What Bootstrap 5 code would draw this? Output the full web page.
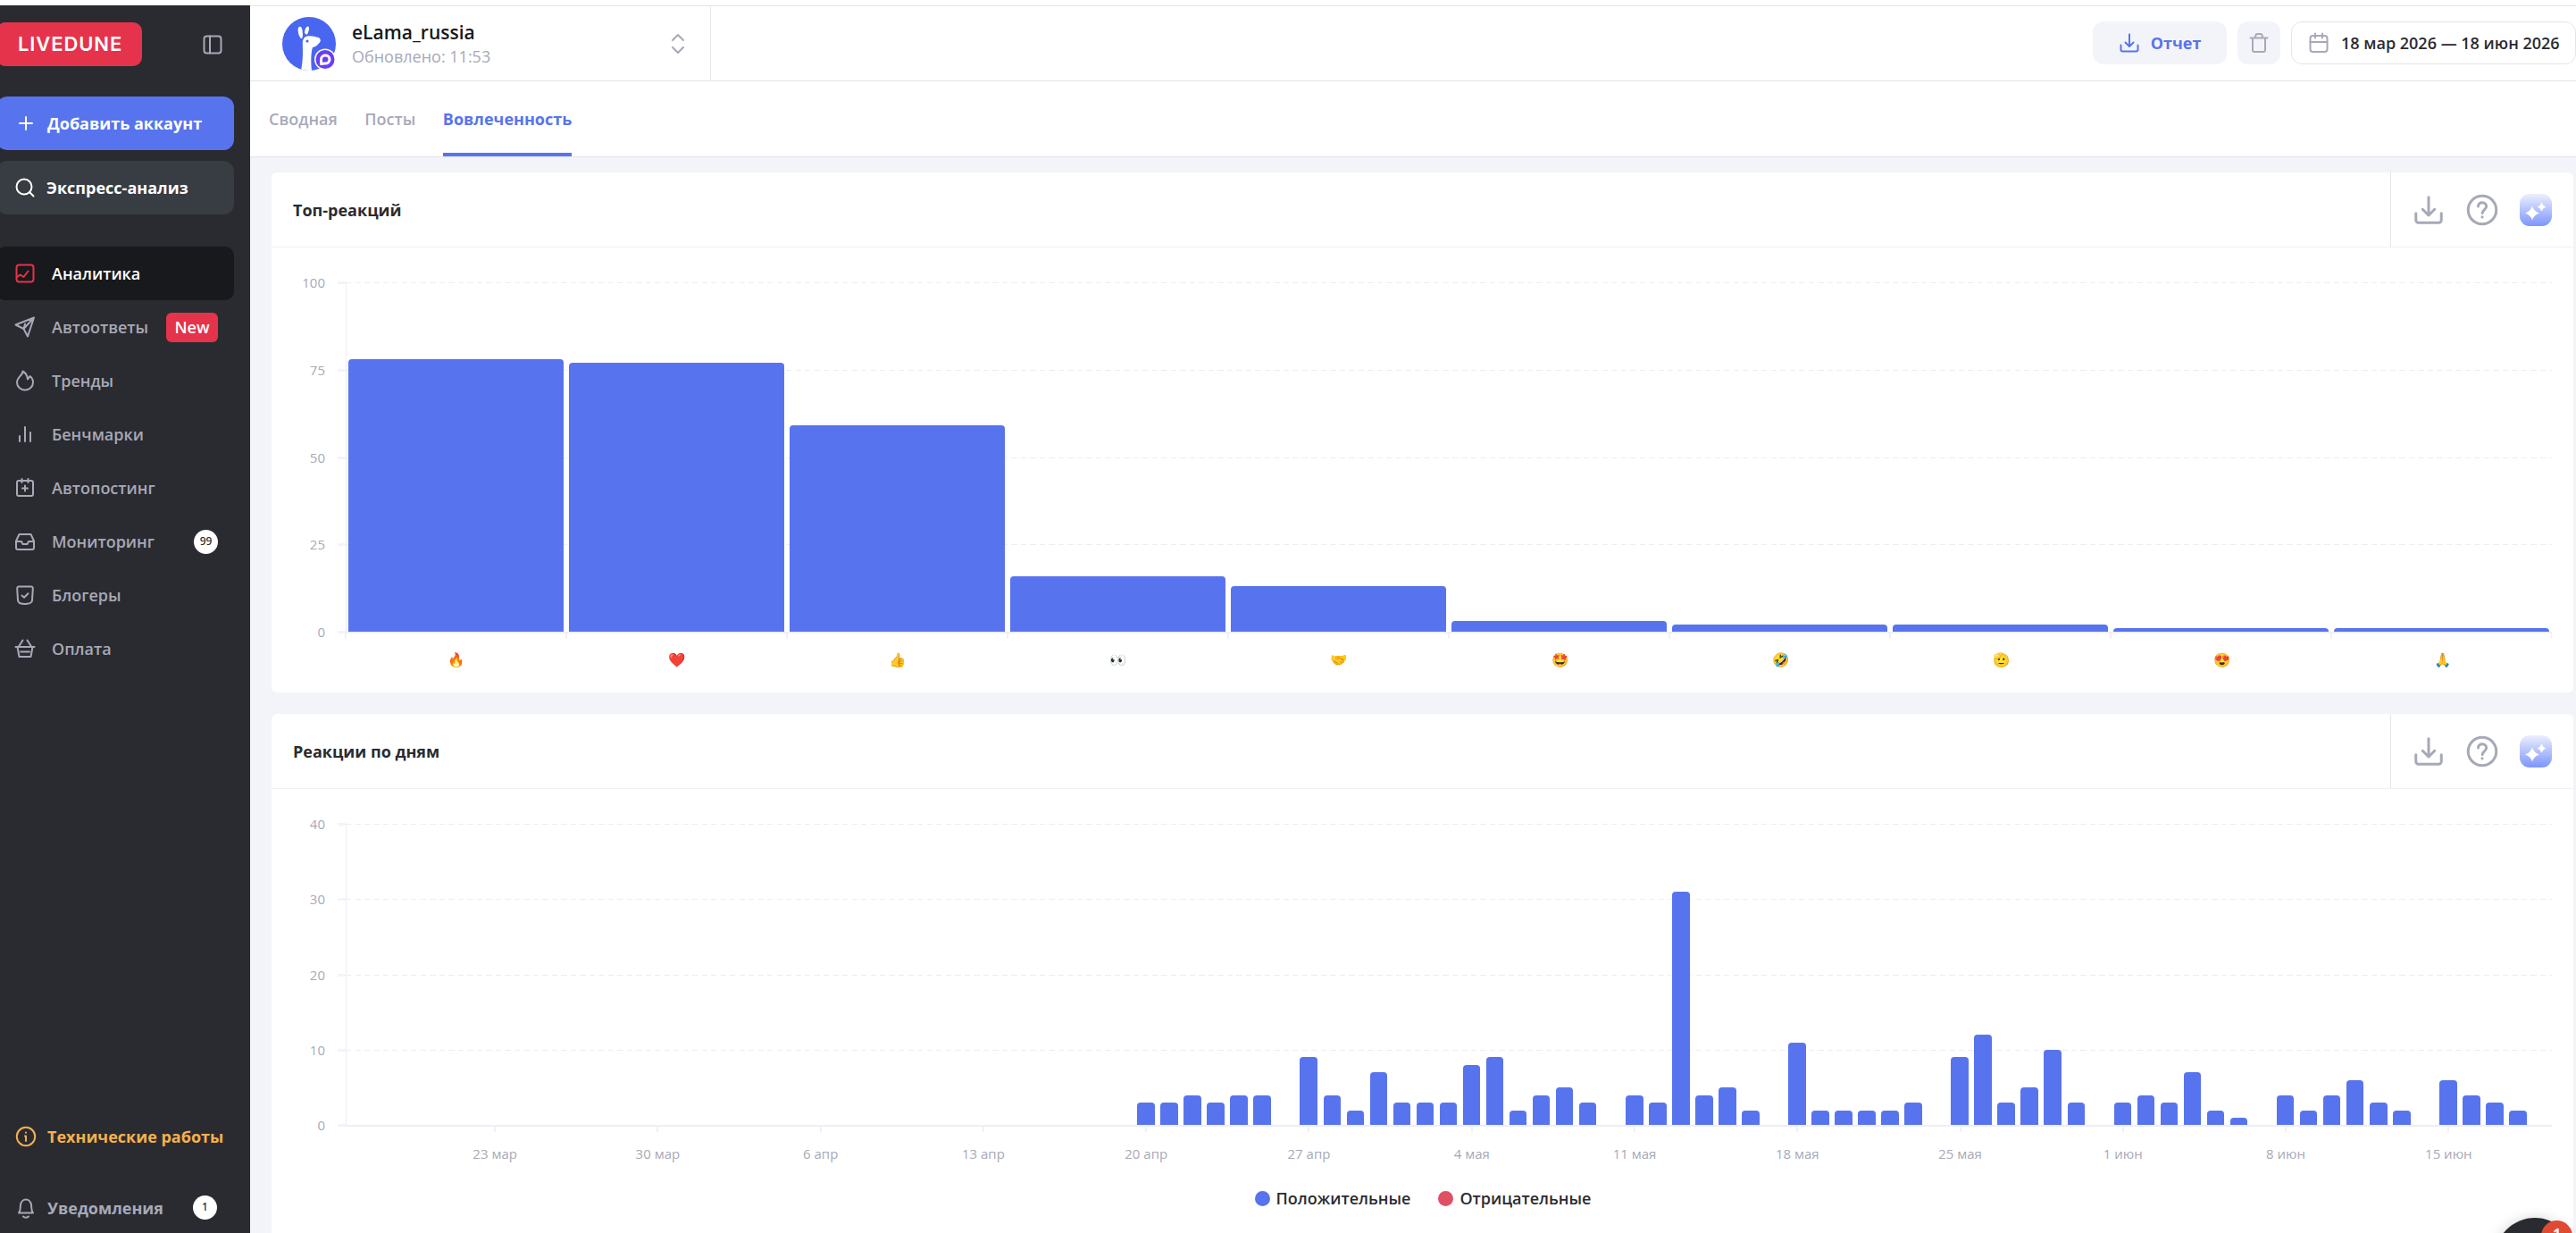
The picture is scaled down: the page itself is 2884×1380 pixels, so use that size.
<!DOCTYPE html>
<html lang="ru">
<head>
    <meta charset="UTF-8">
    <meta name="viewport" content="width=device-width, initial-scale=1.0">
    <title>Вовлеченность</title>
    <!-- Bootstrap CSS -->
    <link href="https://cdn.jsdelivr.net/npm/bootstrap@5.3.0/dist/css/bootstrap.min.css" rel="stylesheet">

    <style>
        body { font-family: "Open Sans", "Noto Sans", sans-serif; font-size: 18px; line-height: 24px; color: #2a2b30; background: #fff; height: 1380px; overflow: hidden; padding-top: 6px; }
        svg { display: block; fill: none; stroke: currentColor; stroke-width: 2; stroke-linecap: round; stroke-linejoin: round; flex-shrink: 0; }
        svg.solid { stroke: none; }
        a { color: inherit; text-decoration: none; }
        .ic { width: 24px; height: 24px; }

        /* Sidebar */
        .side { width: 280px; background: #2a2b30; color: #a7a9b7; overflow: hidden; }
        .side-top { height: 49px; margin: 19px 30px 34px -4px; }
        .logo { font-family: Inter, sans-serif; font-weight: 600; font-size: 22px; letter-spacing: .9px; background: #e5334b; color: #fff; border-radius: 10px; width: 163px; padding-left: 24px; line-height: 49px; }
        .side-btn, .side-link { height: 60px; margin-left: -4px; margin-right: 18px; color: #fff; border-radius: 12px; font-weight: 700; }
        .side-btn { padding-left: 20px; gap: 12px; margin-bottom: 12px; }
        .btn-add { background: #5774ee; }
        .btn-add .ic { margin-left: 1px; }
        .btn-express { background: #383c43; margin-bottom: 36px; }
        .side-link { padding-left: 20px; padding-right: 18px; gap: 18px; color: #a7a9b7; font-weight: 600; }
        .side-link.active { background: #18191c; color: #fff; border-radius: 10px; }
        .side-link.active svg { color: #e5334b; }
        .tag-new { background: #e5334b; color: #fff; border-radius: 6px; width: 58px; line-height: 33px; text-align: center; }
        .count { width: 27px; height: 27px; border-radius: 50%; background: #fff; color: #2a2b30; font-family: "Noto Sans", sans-serif; font-size: 12px; line-height: 26px; text-align: center; font-weight: 500; }
        .side-foot { gap: 54px; font-weight: 700; padding: 0 37px 15px 17px; }
        .side-foot a { gap: 12px; }
        .warn { color: #f5b04e; }

        /* Header and tabs */
        .wrap, .main { height: 1374px; }
        .main { width: 2604px; background: #f3f4f9; overflow: hidden; }
        .topbar { height: 85px; background: #fff; border-top: 1px solid #e4e5ea; border-bottom: 1px solid #e4e5ea; }
        .account { width: 516px; border-right: 1px solid #e9eaef; padding: 0 28px 0 36px; gap: 18px; }
        .acc-name { font-size: 21px; font-weight: 600; color: #18191c; line-height: 28px; }
        .acc-date { color: #a7a9b7; line-height: 26px; }
        .tools { gap: 12px; padding-bottom: 1px; }
        .tool { height: 48px; border-radius: 12px; background: #f3f4f9; color: #a7a9b7; }
        .tool-report { width: 150px; color: #5774ee; font-weight: 700; gap: 12px; }
        .tool-delete { width: 48px; }
        .tool-date { width: 319px; background: #fff; border: 1px solid #e4e5ea; gap: 13px; padding-left: 18px; }
        .tool-date span { color: #2a2b30; font-weight: 600; }
        .tabs { height: 85px; background: #fff; border-bottom: 1px solid #e4e5ea; padding-left: 21px; gap: 30.5px; color: #a7a9b7; font-weight: 600; }
        .tabs a { line-height: 84px; }
        .tabs .current { color: #5774ee; font-weight: 700; box-shadow: inset 0 -4px #5774ee; }

        /* Chart cards */
        .cards { padding: 17px 3px 0 24px; gap: 24px; }
        .panel { background: #fff; border-radius: 6px; }
        .panel-top { height: 582px; }
        .panel-days { height: 620px; }
        .panel-head { height: 84px; border-bottom: 1px solid #f0f1f6; padding-left: 24px; font-weight: 700; }
        .panel-tools { width: 205px; border-left: 1px solid #e4e5ea; color: #a7a9b7; padding-left: 24px; gap: 24px; }
        .panel-tools svg { width: 36px; height: 36px; }
        .panel-body { padding: 39px 24px 0 0; }
        .plot { display: grid; font-size: 15px; color: #a7a9b7; }
        .plot > * { grid-area: 1 / 1; }
        .y-row { height: var(--step); }
        .y-row:last-child { height: 0; }
        .y-label { width: 60px; margin: -12px 14px 0 0; text-align: right; }
        .y-tick { width: 9px; height: 3px; background: #f3f4f9; margin-top: -1px; }
        .y-line { height: 1px; background: repeating-linear-gradient(90deg, #ededf2 0 6px, transparent 6px 10.5px); }
        .y-row:last-child .y-line { height: 2px; background: #eeeff6; }
        .bars { margin-left: 83px; box-shadow: inset 1px 0 #eeeff5; }
        .bar { background: #5774ee; border-radius: 4px 4px 0 0; }
        .reactions .bar { width: 241.5px; }
        .days { padding: 0 24px; }
        .days .bar { width: 19.6px; }
        .x-axis { margin-left: 82px; color: #a7a9b7; font-size: 15px; }
        .x-cell { border-left: 2px solid #f0f1f7; height: 8px; }
        .x-cell:last-child { border-right: 1px solid #f0f1f7; }
        .emoji { width: 0; font-size: 15.5px; line-height: 20px; margin-top: 13px; padding-left: 2px; }
        .weeks { margin-left: 159px; }
        .week { width: 182.28px; }
        .week i { width: 2px; height: 8px; background: #f0f1f7; margin-bottom: 12px; }
        .legend { gap: 31px; margin-top: 26px; padding-left: 25px; font-weight: 600; }
        .legend i { width: 17px; height: 17px; border-radius: 50%; }
        .legend span { gap: 7px; }
        .dot-positive { background: #5774ee; }
        .dot-negative { background: #e05063; }

        /* Chat button */
        .chat { position: fixed; left: 2793px; top: 1363px; width: 90px; height: 90px; border-radius: 50%; background: #2a2b30; box-shadow: 0 2px 16px rgba(0, 0, 0, .2); }
        .chat b { position: absolute; left: 52px; top: 3px; width: 35px; height: 35px; border-radius: 50%; background: #e04a33; color: #fff; font-size: 16px; line-height: 31px; text-align: center; }
    </style>
</head>
<body>
    <!-- Icons -->
    <svg class="d-none">
        <symbol id="i-panel" viewBox="0 0 24 24"><rect x="2.5" y="2.5" width="19" height="19" rx="3"/><path d="M9 2.5v19"/></symbol>
        <symbol id="i-plus" viewBox="0 0 24 24"><path d="M12 5v14M5 12h14"/></symbol>
        <symbol id="i-search" viewBox="0 0 24 24"><circle cx="11" cy="11" r="8.5"/><path d="M17.5 17.5l4 4"/></symbol>
        <symbol id="i-chart" viewBox="0 0 24 24"><rect x="2.5" y="2.5" width="19" height="19" rx="3"/><path d="M3 16l3.5-2.5 4 2.5 5-6.5"/></symbol>
        <symbol id="i-send" viewBox="0 0 24 24"><path d="M22 1.5L1.500 9.500l9 4.500 4.500 8.500zM10.500 14L22 1.500M10.500 14l1.500-5.500"/></symbol>
        <symbol id="i-fire" viewBox="0 0 24 24"><path d="M9.500 1.500c.5 4-6.500 6.500-6.500 12.500a9 8.500 0 0 0 18 0c0-3.500-1.500-5.500-3.500-7l-2.500 3.500c-.5-3.500-2-7.500-5.500-9z"/></symbol>
        <symbol id="i-bench" viewBox="0 0 24 24"><path d="M6 14v6M12 4v16M18 10v10"/></symbol>
        <symbol id="i-post" viewBox="0 0 24 24"><rect x="3" y="4" width="18" height="17" rx="2"/><path d="M8.500 2v4M15.500 2v4M12 9.500v6M9 12.500h6"/></symbol>
        <symbol id="i-inbox" viewBox="0 0 24 24"><path d="M5.500 4h13l3.500 7.500v7.500a2 2 0 0 1-2 2H4a2 2 0 0 1-2-2v-7.500zM2 12h6l1.500 3h5l1.500-3h6"/></symbol>
        <symbol id="i-shield" viewBox="0 0 24 24"><path d="M5 2.500h14a1.800 1.800 0 0 1 1.800 2L20 18c-.2 3-5 4-8 4s-7.500-1-8-4L3.200 4.500a1.800 1.800 0 0 1 1.800-2zM8.500 12.500l2.500 2.200 4.500-4.500"/></symbol>
        <symbol id="i-basket" viewBox="0 0 24 24"><path d="M1.500 10h21M3.500 10l2 11h13l2-11M5 9.500L9.500 2.500M19 9.500l-4.500-7M7 15.500h10"/></symbol>
        <symbol id="i-info" viewBox="0 0 24 24"><circle cx="12" cy="12" r="10.200"/><path d="M12 11.500V17M12 7.500v.3M11 11.500h1"/></symbol>
        <symbol id="i-bell" viewBox="0 0 24 24"><path d="M4 17.500c2-2 1.500-4 2-9 .5-3.500 3-6 6-6s5.500 2.500 6 6c.5 5 0 7 2 9zM9 21.500c1.500 1.500 4.500 1.500 6 0"/></symbol>
        <symbol id="i-down" viewBox="0 0 24 24"><path d="M12 2.500v13M7.500 11.500l4.500 4.500 4.500-4.500M2.500 14.500v5a2 2 0 0 0 2 2h15a2 2 0 0 0 2-2v-5"/></symbol>
        <symbol id="i-help" viewBox="0 0 24 24"><circle cx="12" cy="12" r="10.500"/><path d="M9 9.300c.3-3.800 6-3.600 6.100 0 0 2.400-3 2.700-3 5M12 17.200v.1"/></symbol>
        <symbol id="i-trash" viewBox="0 0 24 24"><path d="M2.500 6.500h19M5 6.500V20a2 2 0 0 0 2 2h10a2 2 0 0 0 2-2V6.500M8 6c0-3 1-4 2.500-4h3C15 2 16 3 16 6"/></symbol>
        <symbol id="i-cal" viewBox="0 0 24 24"><rect x="2.500" y="4" width="19" height="18" rx="3"/><path d="M2.500 11h19M8 1.500v5M16 1.500v5"/></symbol>
    </svg>

    <div class="wrap d-flex">
        <!-- Sidebar -->
        <aside class="side d-flex flex-column">
            <div class="side-top d-flex justify-content-between align-items-center">
                <a href="#" class="logo">LIVEDUNE</a>
                <svg class="ic"><use href="#i-panel"/></svg>
            </div>
            <a href="#" class="side-btn btn-add d-flex align-items-center"><svg class="ic"><use href="#i-plus"/></svg>Добавить аккаунт</a>
            <a href="#" class="side-btn btn-express d-flex align-items-center"><svg class="ic"><use href="#i-search"/></svg>Экспресс-анализ</a>
            <nav>
                <a href="#" class="side-link active d-flex align-items-center"><svg class="ic"><use href="#i-chart"/></svg>Аналитика</a>
                <a href="#" class="side-link d-flex align-items-center"><svg class="ic"><use href="#i-send"/></svg>Автоответы<span class="tag-new ms-auto">New</span></a>
                <a href="#" class="side-link d-flex align-items-center"><svg class="ic"><use href="#i-fire"/></svg>Тренды</a>
                <a href="#" class="side-link d-flex align-items-center"><svg class="ic"><use href="#i-bench"/></svg>Бенчмарки</a>
                <a href="#" class="side-link d-flex align-items-center"><svg class="ic"><use href="#i-post"/></svg>Автопостинг</a>
                <a href="#" class="side-link d-flex align-items-center"><svg class="ic"><use href="#i-inbox"/></svg>Мониторинг<span class="count ms-auto">99</span></a>
                <a href="#" class="side-link d-flex align-items-center"><svg class="ic"><use href="#i-shield"/></svg>Блогеры</a>
                <a href="#" class="side-link d-flex align-items-center"><svg class="ic"><use href="#i-basket"/></svg>Оплата</a>
            </nav>
            <div class="side-foot d-flex flex-column mt-auto">
                <a href="#" class="warn d-flex align-items-center text-nowrap"><svg class="ic"><use href="#i-info"/></svg>Технические работы</a>
                <a href="#" class="d-flex align-items-center"><svg class="ic"><use href="#i-bell"/></svg>Уведомления<span class="count ms-auto">1</span></a>
            </div>
        </aside>

        <main class="main">
            <!-- Account header -->
            <header class="topbar d-flex">
                <div class="account d-flex align-items-center">
                    <svg class="solid" width="60" height="60" viewBox="0 0 60 60">
                        <defs><clipPath id="round"><circle cx="30" cy="30" r="30"/></clipPath></defs>
                        <circle cx="30" cy="30" r="30" fill="#4866f0"/>
                        <g clip-path="url(#round)" fill="#fff">
                            <path d="M21 60c2.500-12 2-22 1.800-30-.3-6 3-9 7-8.800 4-.2 7 .8 11 1.800 3 2 2.500 5-.3 7-1.500 2.500-4 3.500-6.500 4-2 6-2 17-1 26z"/>
                            <path d="M18 12c1.500-2.500 4-1 4.500 3s1 9-1 9-5-8-3.500-12zM25 18c0-4 2-8 4-7.500s.5 7.500-1.500 9.500z"/>
                        </g>
                        <circle cx="28" cy="27" r="1.600" fill="#4866f0"/>
                        <circle cx="48" cy="47.500" r="12" fill="#fff"/>
                        <circle cx="48" cy="47.500" r="10.500" fill="#6a3df5"/>
                        <path d="M43.500 52.500v-5c0-6 9.500-6 9.500 0 0 3-2.500 5-5.500 4.500z" stroke="#fff" stroke-width="3"/>
                    </svg>
                    <div>
                        <div class="acc-name">eLama_russia</div>
                        <div class="acc-date">Обновлено: 11:53</div>
                    </div>
                    <svg class="ms-auto" width="16" height="24" viewBox="0 0 16 24" color="#a7a9b7"><path d="M2 8l6-6 6 6M2 16l6 6 6-6"/></svg>
                </div>
                <div class="tools d-flex align-items-center ms-auto">
                    <a href="#" class="tool tool-report d-flex align-items-center justify-content-center"><svg class="ic"><use href="#i-down"/></svg>Отчет</a>
                    <a href="#" class="tool tool-delete d-flex align-items-center justify-content-center"><svg class="ic"><use href="#i-trash"/></svg></a>
                    <a href="#" class="tool tool-date d-flex align-items-center text-nowrap"><svg class="ic"><use href="#i-cal"/></svg><span>18 мар 2026 — 18 июн 2026</span></a>
                </div>
            </header>

            <!-- Tabs -->
            <nav class="tabs d-flex">
                <a href="#">Сводная</a>
                <a href="#">Посты</a>
                <a href="#" class="current">Вовлеченность</a>
            </nav>

            <div class="cards d-flex flex-column">
                <!-- Top reactions -->
                <section class="panel panel-top">
                    <div class="panel-head d-flex align-items-center justify-content-between">
                        Топ-реакций
                        <div class="panel-tools d-flex align-items-center h-100">
                            <svg><use href="#i-down"/></svg>
                            <svg><use href="#i-help"/></svg>
                            <svg class="solid" viewBox="0 0 36 36">
                                <linearGradient id="aiTop" x1="0" y1="0" x2="0" y2="1"><stop offset="0" stop-color="#eceffd"/><stop offset="1" stop-color="#7c95fb"/></linearGradient>
                                <rect width="36" height="36" rx="11" fill="url(#aiTop)"/>
                                <path d="M14 13.500q1.800 6 8 8-6.200 2-8 8-1.800-6-8-8 6.200-2 8-8zM24.500 9.500q1.200 3.600 4.700 5-3.500 1.400-4.700 5-1.200-3.600-4.700-5 3.500-1.400 4.700-5z" fill="#fff"/>
                            </svg>
                        </div>
                    </div>
                    <div class="panel-body">
                        <div class="plot" id="reactionsPlot" style="--step: 97.8px"></div>
                        <div class="x-axis d-flex" id="reactionsTicks"></div>
                        <div class="x-axis d-flex" id="reactionsLabels"></div>
                    </div>
                </section>

                <!-- Reactions by day -->
                <section class="panel panel-days">
                    <div class="panel-head d-flex align-items-center justify-content-between">
                        Реакции по дням
                        <div class="panel-tools d-flex align-items-center h-100">
                            <svg><use href="#i-down"/></svg>
                            <svg><use href="#i-help"/></svg>
                            <svg class="solid" viewBox="0 0 36 36">
                                <linearGradient id="aiDays" x1="0" y1="0" x2="0" y2="1"><stop offset="0" stop-color="#eceffd"/><stop offset="1" stop-color="#7c95fb"/></linearGradient>
                                <rect width="36" height="36" rx="11" fill="url(#aiDays)"/>
                                <path d="M14 13.500q1.800 6 8 8-6.200 2-8 8-1.800-6-8-8 6.200-2 8-8zM24.500 9.500q1.200 3.600 4.700 5-3.500 1.400-4.700 5-1.200-3.600-4.700-5 3.500-1.400 4.700-5z" fill="#fff"/>
                            </svg>
                        </div>
                    </div>
                    <div class="panel-body">
                        <div class="plot" id="daysPlot" style="--step: 84.35px"></div>
                        <div class="x-axis weeks d-flex" id="weekLabels"></div>
                        <div class="legend d-flex justify-content-center">
                            <span class="d-flex align-items-center"><i class="dot-positive"></i>Положительные</span>
                            <span class="d-flex align-items-center"><i class="dot-negative"></i>Отрицательные</span>
                        </div>
                    </div>
                </section>
            </div>
        </main>
    </div>

    <div class="chat"><b>1</b></div>

    <script src="https://cdn.jsdelivr.net/npm/bootstrap@5.3.0/dist/js/bootstrap.bundle.min.js"></script>
    <script>
        const reactions = [
            ['🔥', 78], ['❤️', 77], ['👍', 59], ['👀', 16], ['🤝', 13],
            ['🤩', 3], ['🤣', 2], ['🫡', 2], ['😍', 1], ['🙏', 1]
        ];

        // Reactions per day, 18 March to 18 June; the first 33 days are empty
        const days = Array(33).fill(0).concat([
            3, 3, 4, 3, 4, 4, 0, 9, 4, 2, 7, 3, 3, 3, 8, 9, 2, 4, 5, 3, 0,
            4, 3, 31, 4, 5, 2, 0, 11, 2, 2, 2, 2, 3, 0, 9, 12, 3, 5, 10, 3, 0,
            3, 4, 3, 7, 2, 1, 0, 4, 2, 4, 6, 3, 2, 0, 6, 4, 3, 2
        ]);
        const weeks = ['23 мар', '30 мар', '6 апр', '13 апр', '20 апр', '27 апр', '4 мая',
            '11 мая', '18 мая', '25 мая', '1 июн', '8 июн', '15 июн'];

        // Function to draw the grid rows and the bars over them
        function drawPlot(id, ticks, values, barsClass) {
            const max = ticks[0];
            const rows = ticks.map(t => `
                <div class="y-row d-flex">
                    <div class="y-label">${t}</div><div class="y-tick"></div><div class="y-line flex-grow-1"></div>
                </div>`).join('');
            const bars = values.map(v => `
                <div class="d-flex h-100 justify-content-center align-items-end" style="width: ${100 / values.length}%">
                    <div class="bar flex-shrink-0" style="height: ${v / max * 100}%"></div>
                </div>`).join('');
            document.getElementById(id).innerHTML =
                `<div>${rows}</div><div class="bars d-flex ${barsClass}">${bars}</div>`;
        }

        drawPlot('reactionsPlot', [100, 75, 50, 25, 0], reactions.map(r => r[1]), 'reactions');
        drawPlot('daysPlot', [40, 30, 20, 10, 0], days, 'days');

        document.getElementById('reactionsTicks').innerHTML =
            reactions.map(() => '<div class="x-cell flex-fill"></div>').join('');
        document.getElementById('reactionsLabels').innerHTML =
            reactions.map(r => `<div class="emoji flex-fill text-center">${r[0]}</div>`).join('');
        document.getElementById('weekLabels').innerHTML =
            weeks.map(w => `<div class="week d-flex flex-column align-items-center flex-shrink-0"><i></i>${w}</div>`).join('');
    </script>
</body>
</html>
